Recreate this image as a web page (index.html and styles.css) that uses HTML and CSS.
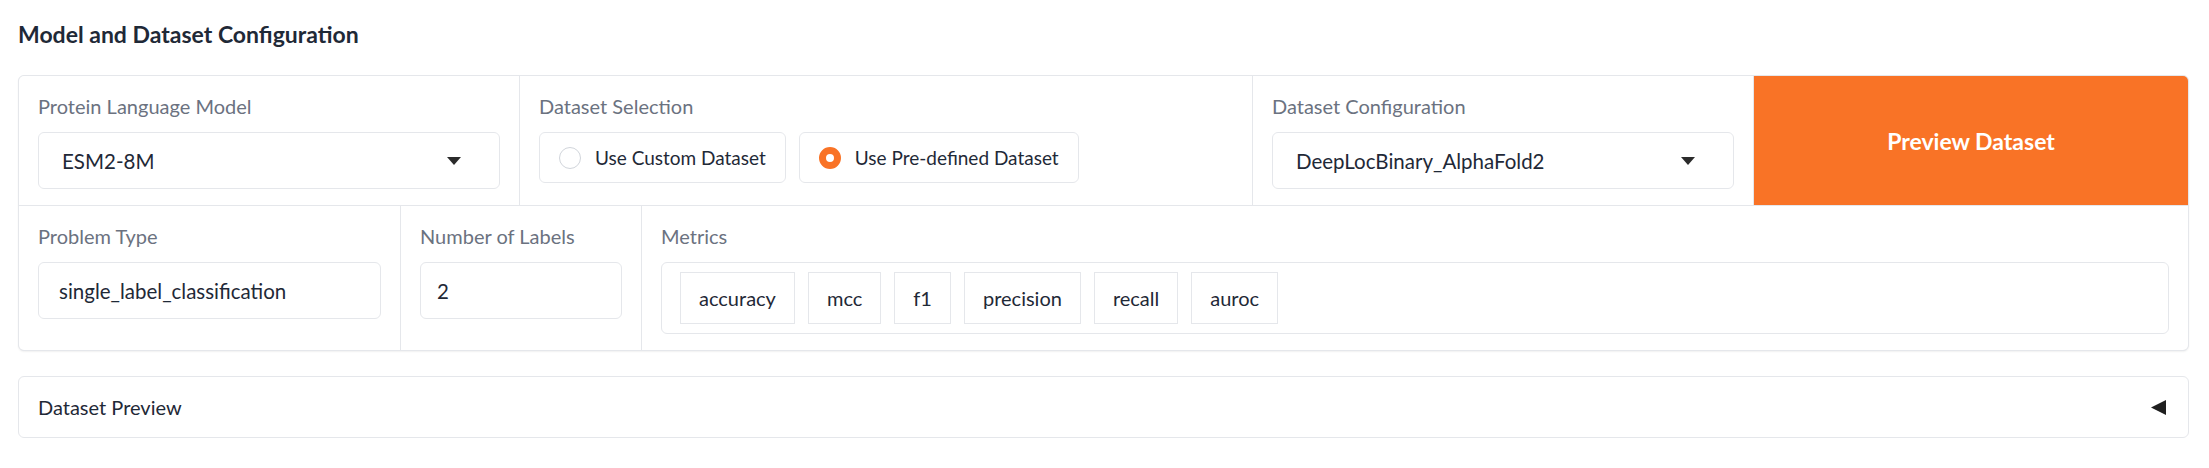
FILE: index.html
```html
<!DOCTYPE html>
<html lang="en">
<head>
<meta charset="utf-8">
<title>Model and Dataset Configuration</title>
<link rel="stylesheet" href="styles.css">
</head>
<body>
<div class="page">
  <h2 class="title">Model and Dataset Configuration</h2>
  <div class="card">
    <div class="row row-top">
      <div class="cell c-model">
        <div class="label">Protein Language Model</div>
        <div class="input select">
          <span>ESM2-8M</span>
          <svg class="caret" width="14" height="8" viewBox="0 0 14 8"><path d="M0 0h14L7 8z" fill="#2b2b2b"/></svg>
        </div>
      </div>
      <div class="cell c-sel">
        <div class="label">Dataset Selection</div>
        <div class="radios">
          <label class="radio"><span class="dot"></span><span>Use Custom Dataset</span></label>
          <label class="radio"><span class="dot on"></span><span>Use Pre-defined Dataset</span></label>
        </div>
      </div>
      <div class="cell c-conf">
        <div class="label">Dataset Configuration</div>
        <div class="input select">
          <span>DeepLocBinary_AlphaFold2</span>
          <svg class="caret" width="14" height="8" viewBox="0 0 14 8"><path d="M0 0h14L7 8z" fill="#2b2b2b"/></svg>
        </div>
      </div>
      <button class="preview">Preview Dataset</button>
    </div>
    <div class="row row-bottom">
      <div class="cell c-prob">
        <div class="label">Problem Type</div>
        <div class="input">single_label_classification</div>
      </div>
      <div class="cell c-num">
        <div class="label">Number of Labels</div>
        <div class="input">2</div>
      </div>
      <div class="cell c-metrics">
        <div class="label">Metrics</div>
        <div class="tags">
          <span class="tag">accuracy</span>
          <span class="tag">mcc</span>
          <span class="tag">f1</span>
          <span class="tag">precision</span>
          <span class="tag">recall</span>
          <span class="tag">auroc</span>
        </div>
      </div>
    </div>
  </div>
  <div class="accordion">
    <span>Dataset Preview</span>
    <svg class="tri" width="15" height="15" viewBox="0 0 15 15"><path d="M15 0v15L0 7.5z" fill="#1f1f1f"/></svg>
  </div>
</div>
</body>
</html>
```
FILE: styles.css
```css
* { box-sizing: border-box; }
html, body { margin: 0; padding: 0; background: #fff; }
body {
  font-family: Lato, "Noto Sans", sans-serif;
  color: #1f2937;
}
.page {
  padding: 19px 20px 0 18px;
}
.title {
  margin: 0 0 26px;
  font-size: 23px;
  line-height: 30px;
  font-weight: 700;
  color: #1f2937;
}
.card {
  border: 1px solid #e5e7eb;
  border-radius: 6px;
  background: #e5e7eb;
  display: flex;
  flex-direction: column;
  gap: 1px;
  overflow: hidden;
  box-shadow: 0 1px 2px rgba(0,0,0,0.06);
}
.row {
  display: flex;
  gap: 1px;
}
.cell {
  background: #fff;
  padding: 16px 19px 16px 19px;
}
.c-model, .c-conf { width: 500px; flex: none; }
.c-sel { flex: 1; }
.c-prob { width: 381px; flex: none; }
.c-num { width: 240px; flex: none; }
.c-metrics { flex: 1; }
.label {
  font-size: 20px;
  line-height: 28px;
  color: #6b7280;
  margin-bottom: 12px;
}
.input {
  height: 57px;
  border: 1px solid #e5e7eb;
  border-radius: 6px;
  padding: 0 20px 0 23px;
  display: flex;
  align-items: center;
  font-size: 20.5px;
  color: #1f2937;
}
.c-num .input { padding-left: 16px; }
.c-prob .input { padding-left: 20px; }
.select { justify-content: space-between; padding-right: 38px; }
.caret { display: block; }
.radios {
  display: flex;
  gap: 13px;
}
.radio {
  height: 51px;
  border: 1px solid #e5e7eb;
  border-radius: 6px;
  padding: 0 19px 0 19px;
  display: flex;
  align-items: center;
  gap: 14px;
  font-size: 19px;
  color: #1f2937;
}
.dot {
  width: 22px;
  height: 22px;
  border-radius: 50%;
  border: 1px solid #d1d5db;
  background: #fff;
  flex: none;
}
.dot.on {
  border: 7px solid #f97326;
  background: #fff;
}
.preview {
  width: 434px;
  flex: none;
  border: 0;
  margin: 0;
  background: #f97326;
  color: #fff;
  font-family: inherit;
  font-size: 23px;
  font-weight: 700;
  cursor: pointer;
}
.tags {
  border: 1px solid #e5e7eb;
  border-radius: 6px;
  padding: 9px 18px 9px 18px;
  display: flex;
  gap: 13px;
}
.tag {
  height: 52px;
  border: 1px solid #e5e7eb;
  padding: 0 18px;
  display: flex;
  align-items: center;
  font-size: 20px;
  color: #1f2937;
}
.accordion {
  margin-top: 25px;
  height: 62px;
  border: 1px solid #e5e7eb;
  border-radius: 6px;
  display: flex;
  align-items: center;
  justify-content: space-between;
  padding: 0 22px 0 19px;
  font-size: 20px;
  color: #1f2937;
}
.tri { display: block; }
```
